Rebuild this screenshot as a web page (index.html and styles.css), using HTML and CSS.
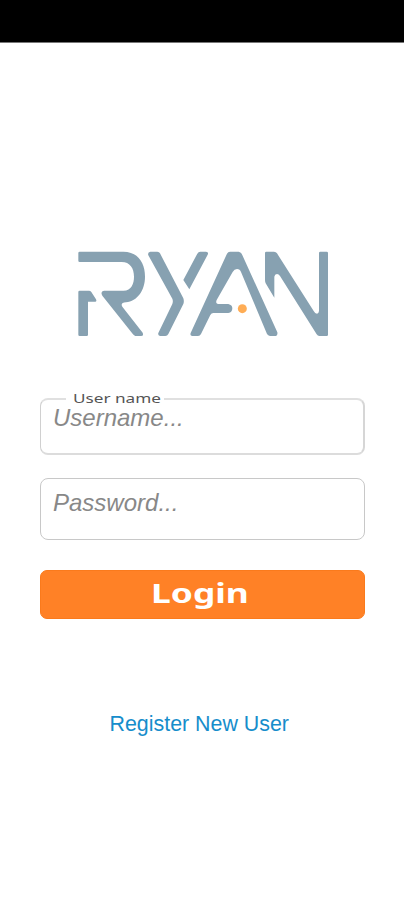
FILE: index.html
```html
<!DOCTYPE html>
<html lang="en">
<head>
<meta charset="utf-8">
<title>Ryan</title>
<link rel="stylesheet" href="styles.css">
</head>
<body>
<div class="status-bar"></div>
<main class="login">
  <svg class="logo" viewBox="0 0 810 315" role="img" aria-label="Ryan">
    <g fill="#87a1b1">
      <path d="M29 35H160C205 35 225 70 225 110C225 150 202 184 168 187Q150 188 157 200L218 278Q222 288 213 288H196Q192 287 189 283L97 167Q90 154 102 152H160C185 152 192 130 192 110C192 85 180 66 155 66H29Q25 66 25 62V39Q25 35 29 35Z"/>
      <path d="M29 152H57Q61 152 64 156L78 178Q81 185 76 185H54V284Q54 288 50 288H29Q25 288 25 284V156Q25 152 29 152Z"/>
      <path d="M241 35H262Q268 36 270 40L340 175Q343 184 340 192L295 282Q292 288 286 288H270Q263 286 265 279L307 192Q310 184 307 176L235 46Q232 37 241 35Z"/>
      <path d="M391 35H408Q417 36 413 44L358 148L340 120L382 41Q385 35 391 35Z"/>
      <path d="M362 279L471 41Q474 35 480 35H506Q512 36 515 41L622 277Q624 288 614 288H600Q594 287 591 282L513 96Q510 87 501 87Q493 87 488 96L440 180Q435 192 448 192H475Q487 195 487 205Q487 217 475 219H430Q424 219 421 225L393 282Q390 288 384 288H367Q359 287 362 279Z"/>
      <path d="M589 35H612Q618 36 621 40L731 213Q735 221 741 221Q746 221 747 213V39Q747 35 751 35H770Q774 35 774 39V284Q774 288 770 288H748Q743 288 740 283L630 108Q626 102 621 102Q614 103 613 110V173L587 130Q585 126 585 120V39Q585 35 589 35Z"/>
    </g>
    <circle cx="517" cy="206" r="13.5" fill="#ffad55"/>
  </svg>
  <form class="form">
    <div class="field field-user">
      <label class="field-label"><span class="label-text">User name</span></label>
      <span class="placeholder">Username...</span>
    </div>
    <div class="field field-password">
      <span class="placeholder">Password...</span>
    </div>
    <button class="submit" type="button"><span class="submit-text">Login</span></button>
  </form>
  <a class="register">Register New User</a>
</main>
</body>
</html>
```
FILE: styles.css
```css
* { box-sizing: border-box; }
body {
  margin: 0;
  height: 900px;
  overflow: hidden;
  background: #fff;
  font-family: "Liberation Sans", Arial, sans-serif;
}
.status-bar {
  height: 43px;
  background: #000;
  border-bottom: 1px solid #777;
}
.login {
  display: flex;
  flex-direction: column;
  padding: 197px 39px 0 40px;
}
.logo {
  display: block;
  width: 270px;
  height: 105px;
  margin-left: 30px;
}
.form {
  display: flex;
  flex-direction: column;
  margin-top: 53px;
}
.field {
  position: relative;
  border: 1px solid #c8c8c8;
  border-radius: 8px;
  padding-left: 12px;
}
.field-user {
  height: 57px;
  padding-top: 8px;
  border-width: 2px 2px 2px 1px;
  border-color: #e0e0e0 #d6d6d6 #dcdcdc #d0d0d0;
}
.field-password {
  height: 62px;
  margin-top: 23px;
  padding-top: 14px;
}
.field-label {
  position: absolute;
  left: 25px;
  top: -9px;
  width: 98px;
  height: 13px;
  padding-left: 7px;
  background: #fff;
}
.label-text {
  display: block;
  width: max-content;
  font: 13px/14px "Noto Sans", sans-serif;
  color: #555;
  transform: scaleX(1.32);
  transform-origin: 0 0;
}
.placeholder {
  display: block;
  font-size: 24px;
  line-height: 20px;
  font-style: italic;
  color: #888;
}
.submit {
  display: flex;
  align-items: center;
  justify-content: center;
  height: 49px;
  margin-top: 30px;
  padding: 0 6px 3px 0;
  border: 1px solid #fa7a1c;
  border-radius: 7px;
  background: #ff8126;
  color: #fff;
}
.submit-text {
  font: bold 26px/36px "Noto Sans", sans-serif;
  transform: scaleX(1.36);
}
.register {
  margin: 93px 0 0 69.5px;
  font-size: 21.4px;
  line-height: 25px;
  color: #168dcb;
}
```
